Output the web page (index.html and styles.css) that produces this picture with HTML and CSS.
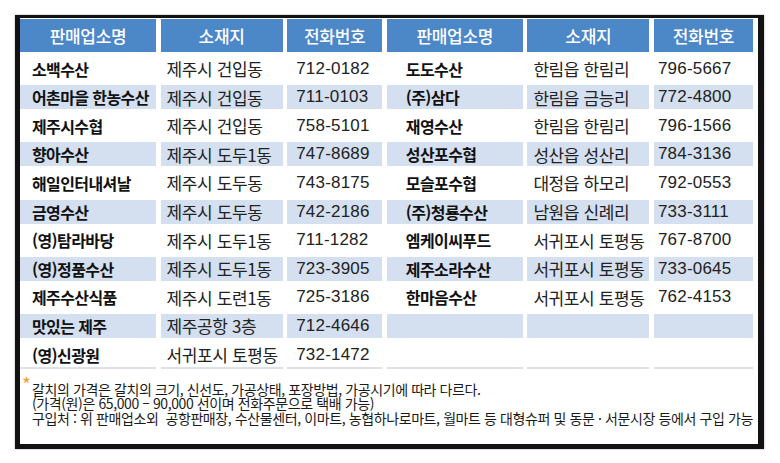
FILE: index.html
```html
<!DOCTYPE html>
<html lang="ko">
<head>
<meta charset="utf-8">
<title>갈치 판매업소</title>
<link rel="stylesheet" href="styles.css">
</head>
<body>
<div class="page">
  <div class="frame">
    <div class="grid">
      <div class="hd">판매업소명</div><div class="hd">소재지</div><div class="hd">전화번호</div>
      <div class="hd">판매업소명</div><div class="hd">소재지</div><div class="hd">전화번호</div>

      <div class="c nm">소백수산</div><div class="c lc">제주시 건입동</div><div class="c ph">712-0182</div>
      <div class="c nm r">도도수산</div><div class="c lc">한림읍 한림리</div><div class="c ph r">796-5667</div>

      <div class="c nm alt">어촌마을 한농수산</div><div class="c lc alt">제주시 건입동</div><div class="c ph alt">711-0103</div>
      <div class="c nm r alt">(주)삼다</div><div class="c lc alt">한림읍 금능리</div><div class="c ph r alt">772-4800</div>

      <div class="c nm">제주시수협</div><div class="c lc">제주시 건입동</div><div class="c ph">758-5101</div>
      <div class="c nm r">재영수산</div><div class="c lc">한림읍 한림리</div><div class="c ph r">796-1566</div>

      <div class="c nm alt">향아수산</div><div class="c lc alt">제주시 도두1동</div><div class="c ph alt">747-8689</div>
      <div class="c nm r alt">성산포수협</div><div class="c lc alt">성산읍 성산리</div><div class="c ph r alt">784-3136</div>

      <div class="c nm">해일인터내셔날</div><div class="c lc">제주시 도두동</div><div class="c ph">743-8175</div>
      <div class="c nm r">모슬포수협</div><div class="c lc">대정읍 하모리</div><div class="c ph r">792-0553</div>

      <div class="c nm alt">금영수산</div><div class="c lc alt">제주시 도두동</div><div class="c ph alt">742-2186</div>
      <div class="c nm r alt">(주)청룡수산</div><div class="c lc alt">남원읍 신례리</div><div class="c ph r alt">733-3111</div>

      <div class="c nm">(영)탐라바당</div><div class="c lc">제주시 도두1동</div><div class="c ph">711-1282</div>
      <div class="c nm r">엠케이씨푸드</div><div class="c lc">서귀포시 토평동</div><div class="c ph r">767-8700</div>

      <div class="c nm alt">(영)정품수산</div><div class="c lc alt">제주시 도두1동</div><div class="c ph alt">723-3905</div>
      <div class="c nm r alt">제주소라수산</div><div class="c lc alt">서귀포시 토평동</div><div class="c ph r alt">733-0645</div>

      <div class="c nm">제주수산식품</div><div class="c lc">제주시 도련1동</div><div class="c ph">725-3186</div>
      <div class="c nm r">한마음수산</div><div class="c lc">서귀포시 토평동</div><div class="c ph r">762-4153</div>

      <div class="c nm alt">맛있는 제주</div><div class="c lc alt">제주공항 3층</div><div class="c ph alt">712-4646</div>
      <div class="c alt"></div><div class="c alt"></div><div class="c alt"></div>

      <div class="c nm last">(영)신광원</div><div class="c lc last">서귀포시 토평동</div><div class="c ph last">732-1472</div>
      <div class="c last"></div><div class="c last"></div><div class="c last"></div>
    </div>
    <div class="notes">
      <p><span class="star">*</span>갈치의 가격은 갈치의 크기, 신선도, 가공상태, 포장방법, 가공시기에 따라 다르다.</p>
      <p>(가격(원)은 65,000 – 90,000 선이며 전화주문으로 택배 가능)</p>
      <p>구입처 : 위 판매업소외&nbsp; 공항판매장, 수산물센터, 이마트, 농협하나로마트, 월마트 등 대형슈퍼 및 동문 · 서문시장 등에서 구입 가능</p>
    </div>
  </div>
</div>
</body>
</html>
```
FILE: styles.css
```css
* { box-sizing: border-box; }
html, body { margin: 0; padding: 0; background: #fff; }
body {
  font-family: "Noto Sans CJK KR", "Noto Sans", sans-serif;
  color: #1a1a1a;
}
.page {
  padding: 15px 16px 14px 15px;
  width: 780px;
  height: 463px;
}
.frame {
  width: 749px;
  height: 434px;
  border-style: solid;
  border-color: #121212;
  border-width: 3px 6px 5px 5px;
  padding: 1px 0 0 0;
  box-shadow: 0 0 2px rgba(0,0,0,0.35);
  background: #fff;
}
.grid {
  display: grid;
  grid-template-columns: 136px 122px 95px 136px 122px 99px;
  grid-template-rows: 33px;
  grid-auto-rows: 24px;
  column-gap: 4.6px;
  row-gap: 4.6px;
}
.hd {
  background: #4c87c8;
  color: #fff;
  font-size: 17px;
  font-weight: 500;
  letter-spacing: -0.3px;
  display: flex;
  align-items: center;
  justify-content: center;
}
.c {
  display: flex;
  align-items: center;
  white-space: nowrap;
}
.alt { background: #d4dfef; }
.last { border-bottom: 2px solid #dde2e8; height: 26px; }
.nm {
  font-size: 16px;
  font-weight: 700;
  letter-spacing: -0.6px;
  padding-left: 12px;
  color: #111;
}
.nm.r { padding-left: 19px; }
.lc {
  font-size: 17px;
  letter-spacing: -0.4px;
  padding-left: 6px;
  color: #222;
}
.ph {
  font-family: "Liberation Sans", Arial, sans-serif;
  font-size: 17px;
  letter-spacing: 0.2px;
  padding-left: 9px;
  color: #222;
}
.ph.r { padding-left: 4px; }
.notes {
  margin-top: 15px;
  padding-left: 12px;
  font-size: 14px;
  letter-spacing: -0.4px;
  line-height: 14.5px;
  color: #1a1a1a;
}
.notes p { margin: 0; white-space: nowrap; }
.l1 { word-spacing: 1px; }
.star {
  display: inline-block;
  width: 10px;
  margin-left: -10px;
  color: #f0a030;
  font-size: 19px;
  vertical-align: 3px;
  line-height: 0;
}
```
